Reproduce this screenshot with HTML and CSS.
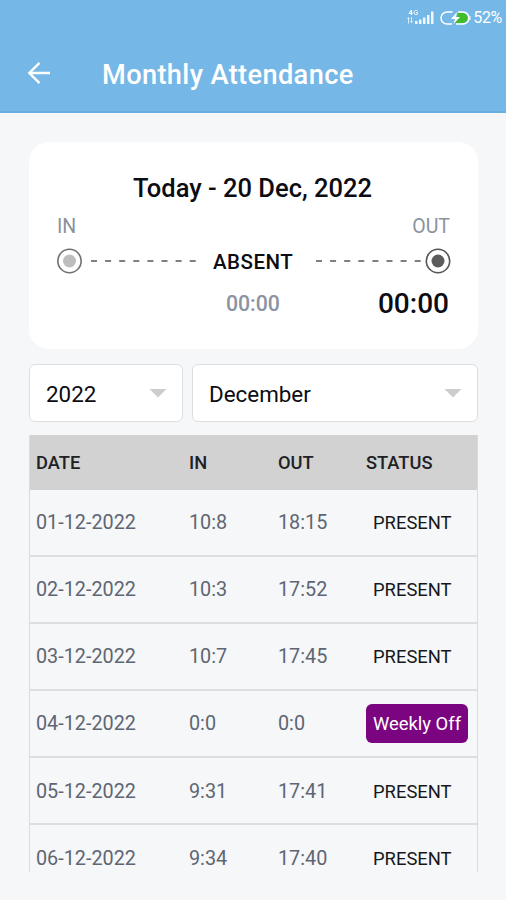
FILE: index.html
```html
<!DOCTYPE html>
<html lang="en">
<head>
<meta charset="utf-8">
<title>Monthly Attendance</title>
<link rel="stylesheet" href="styles.css">
</head>
<body>
<header class="topbar">
  <div class="status">
    <svg class="signal" width="30" height="18" viewBox="0 0 30 18" fill="#fff">
      <path d="M5.5 1L3 4.500h3.700M5.500 1v5M11.500 2.200C9.500.5 8 2 8 3.500s2 3 3.500 1.500V3.700H10" fill="none" stroke="#fff" stroke-width="1"/>
      <path d="M1 10l1.500-2L4 10H3v4.500H2V10zM4 12h1V8h1v4h1l-1.500 2.500z" opacity=".75"/>
      <path d="M9 12h2.500v3H9zM13 10.500h2.500V15H13zM17 8.500h2.500V15H17zM21 6h2.500v9H21zM25 2.500h2.500V15H25z" opacity=".9"/>
    </svg>
    <svg class="battery" width="31" height="16" viewBox="0 0 31 16">
      <path d="M18 3h4.500a5 5 0 0 1 0 10H15z" fill="#42bd29"/>
      <path d="M12.500 2H7a6 6 0 0 0 0 12h5M18 2h5a6 6 0 0 1 0 12h-7" fill="none" stroke="#fff" stroke-width="1.500"/>
      <path d="M17 2l-6 7h4l-1.500 5L20 7h-4z" fill="#fff"/>
      <path d="M30 6v4" stroke="#fff" stroke-width="1"/>
    </svg>
    <span class="percent">52%</span>
  </div>
  <div class="titlebar">
    <svg class="back" width="24" height="24" viewBox="0 0 24 24" fill="none" stroke="#fff" stroke-width="2.400"><path d="M23 12H2.500M12.500 1.800L2.300 12l10.200 10.200"/></svg>
    <h1>Monthly Attendance</h1>
  </div>
</header>
<main>
  <section class="card">
    <h2>Today - 20 Dec, 2022</h2>
    <div class="labels"><span>IN</span><span>OUT</span></div>
    <div class="track">
      <svg width="26" height="26" viewBox="0 0 26 26"><circle cx="12.500" cy="13" r="11.700" fill="none" stroke="#707070" stroke-width="1.600"/><circle cx="12.500" cy="13" r="6.500" fill="#bdbdbd"/></svg>
      <svg class="dash-in" width="106" height="2" viewBox="0 0 106 2"><path d="M0 1h106" stroke="#555" stroke-width="1.600" stroke-dasharray="6 8.100"/></svg>
      <strong>ABSENT</strong>
      <svg class="dash-out" width="106" height="2" viewBox="0 0 106 2"><path d="M0 1h106" stroke="#555" stroke-width="1.600" stroke-dasharray="6 8.100"/></svg>
      <svg class="ring-out" width="26" height="26" viewBox="0 0 26 26"><circle cx="13" cy="13" r="11.700" fill="none" stroke="#555" stroke-width="1.600"/><circle cx="13" cy="13" r="6.500" fill="#5c5c5c"/></svg>
    </div>
    <div class="times"><span class="total">00:00</span><span class="out-time">00:00</span></div>
  </section>
  <div class="filters">
    <div class="select year"><span>2022</span><i class="caret"></i></div>
    <div class="select month"><span>December</span><i class="caret"></i></div>
  </div>
  <section class="table">
    <div class="row head"><span>DATE</span><span>IN</span><span>OUT</span><span>STATUS</span></div>
    <div class="row"><span>01-12-2022</span><span>10:8</span><span>18:15</span><span class="badge">PRESENT</span></div>
    <div class="row"><span>02-12-2022</span><span>10:3</span><span>17:52</span><span class="badge">PRESENT</span></div>
    <div class="row"><span>03-12-2022</span><span>10:7</span><span>17:45</span><span class="badge">PRESENT</span></div>
    <div class="row"><span>04-12-2022</span><span>0:0</span><span>0:0</span><span class="badge off">Weekly Off</span></div>
    <div class="row"><span>05-12-2022</span><span>9:31</span><span>17:41</span><span class="badge">PRESENT</span></div>
    <div class="row"><span>06-12-2022</span><span>9:34</span><span>17:40</span><span class="badge">PRESENT</span></div>
  </section>
</main>
</body>
</html>
```
FILE: styles.css
```css
* { box-sizing: border-box; }
body { margin: 0; height: 900px; overflow: hidden; background: #f5f7f9; font-family: Roboto, sans-serif; color: #0c0c12; }
svg { display: block; flex: none; }
h1, h2 { margin: 0; font-weight: 500; white-space: nowrap; }
.topbar { height: 113px; background: #75b7e6; border-bottom: 2px solid #68afe1; color: #fff; }
.status { height: 35px; display: flex; align-items: center; justify-content: flex-end; padding-right: 4px; }
.battery { margin: 0 2px 0 4px; }
.percent { font-size: 16px; line-height: 35px; letter-spacing: -.3px; }
.titlebar { height: 78px; display: flex; align-items: center; padding-left: 27px; }
.back { margin-top: -2px; }
h1 { font-size: 27.2px; letter-spacing: .37px; line-height: 32px; margin: 2px 0 0 51px; }
main { padding: 29px 28px 0 29px; }
.card { height: 207px; background: #fff; border-radius: 20px; padding: 30px 28px 0; }
h2 { font-size: 25.5px; line-height: 32px; text-align: center; margin-right: 2px; }
.labels { display: flex; justify-content: space-between; margin-top: 11px; font-size: 19.5px; line-height: 24px; color: #8b919e; }
.track { display: flex; align-items: center; height: 26px; margin-top: 9px; }
.track strong { font-size: 20.5px; letter-spacing: .5px; line-height: 26px; font-weight: 500; width: 80px; margin: 2px 23px 0 16px; white-space: nowrap; }
.dash-in { margin-left: 8px; }
.ring-out { margin-left: 3px; }
.times { display: flex; justify-content: flex-end; align-items: center; margin-top: 12px; height: 34px; }
.total { font-size: 21.3px; font-weight: 500; color: #8c93a3; margin-right: 98px; }
.out-time { font-size: 28px; font-weight: 500; margin-right: 1px; }
.filters { display: flex; gap: 9px; margin-top: 15px; }
.select { height: 58px; border: 1.5px solid #dcdee0; border-radius: 6px; background: #fff; display: flex; align-items: center; justify-content: space-between; padding: 1px 15px 0 16px; font-size: 22.4px; }
.year { width: 154px; }
.month { flex: 1; }
.caret { width: 18px; height: 9px; background: #cbcdcf; clip-path: polygon(0 0, 100% 0, 50% 100%); margin-top: -1px; }
.table { margin-top: 13px; height: 437px; overflow: hidden; border: solid #d9dbdc; border-width: 0 1px; }
.row { display: grid; grid-template-columns: 153px 89px 88px 1fr; align-items: center; height: 67.1px; padding: 1px 0 0 6px; border-bottom: 2px solid #dcdedf; font-size: 19.8px; color: #5f6673; white-space: nowrap; }
.head { height: 54.6px; margin: 0 -1px; padding: 0 0 0 7px; border: 0; background: #d2d2d2; color: #202126; font-size: 18.3px; font-weight: 500; }
.badge { justify-self: start; height: 39px; line-height: 39px; padding: 0 7px; border-radius: 6px; font-size: 18.4px; color: #17171b; }
.off { background: #7b0480; color: #fff; }
```
